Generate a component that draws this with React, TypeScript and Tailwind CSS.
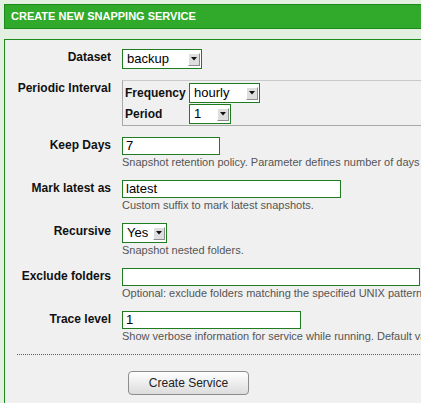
import React from 'react';

const Arrow = () => (
  <span className="mr-[1px] flex h-[13px] w-[12px] items-center justify-center border border-t-white border-l-white border-b-[#8c8c8c] border-r-[#8c8c8c] bg-[#dedede]">
    <svg width="6" height="4" viewBox="0 0 6 4">
      <path d="M0 0h6L3 3.5z" fill="#111" />
    </svg>
  </span>
);

const Select = ({ value, width, height = 'h-[20px]' }: { value: string; width: string; height?: string }) => (
  <div className={`flex ${width} ${height} items-center justify-between border border-[#1f7c1f] bg-white pl-[4px] text-[13px] text-black`}>
    <span>{value}</span>
    <Arrow />
  </div>
);

const Input = ({ value, width }: { value: string; width: string }) => (
  <div className={`flex ${width} h-[18px] items-center border border-[#1f7c1f] bg-white pl-[3px] text-[13px] text-black`}>
    {value}
  </div>
);

const Help = ({ children }: { children: React.ReactNode }) => (
  <div className="h-[14px] whitespace-nowrap text-[11px] leading-[14px] text-[#555]">{children}</div>
);

const Row = ({ label, children }: { label: string; children: React.ReactNode }) => (
  <div className="flex gap-[11px]">
    <div className="w-[106px] shrink-0 text-right text-[12px] font-bold leading-[16px] text-[#111]">{label}</div>
    <div className="flex flex-col">{children}</div>
  </div>
);

export default function App() {
  return (
    <div className="h-[403px] w-[421px] overflow-hidden bg-[#e3efe0] font-['Liberation_Sans',Arial,sans-serif]">
      <div className="w-[640px] pl-[4px] pt-[4px]">
        <div className="flex h-[25px] items-center border border-[#1b8a1b] bg-[#31a92a] pl-[6px] text-[11px] font-bold text-white">
          CREATE NEW SNAPPING SERVICE
        </div>
        <div className="mt-[10px] border-l border-t border-[#1b8a1b] bg-[#f0f0f0] pt-[9px]">
          <div className="flex flex-col gap-[11px]">
            <Row label="Dataset">
              <Select value="backup" width="w-[80px]" />
            </Row>
            <Row label="Periodic Interval">
              <div className="flex w-[500px] flex-col gap-[1px] border border-[#a8a8a8] border-t-[#c8c8c8] pb-[1px] pl-[2px] pt-[2px]">
                <div className="flex items-center gap-[2px]">
                  <span className="w-[62px] text-[12px] font-bold text-[#111]">Frequency</span>
                  <Select value="hourly" width="w-[71px]" />
                </div>
                <div className="flex items-center gap-[2px]">
                  <span className="w-[62px] text-[12px] font-bold text-[#111]">Period</span>
                  <Select value="1" width="w-[42px]" />
                </div>
              </div>
            </Row>
            <Row label="Keep Days">
              <Input value="7" width="w-[98px]" />
              <Help>Snapshot retention policy. Parameter defines number of days</Help>
            </Row>
            <Row label="Mark latest as">
              <Input value="latest" width="w-[219px]" />
              <Help>Custom suffix to mark latest snapshots.</Help>
            </Row>
            <Row label="Recursive">
              <Select value="Yes" width="w-[45px]" />
              <Help>Snapshot nested folders.</Help>
            </Row>
            <Row label="Exclude folders">
              <Input value="" width="w-[298px]" />
              <Help>Optional: exclude folders matching the specified UNIX pattern.</Help>
            </Row>
            <Row label="Trace level">
              <Input value="1" width="w-[179px]" />
              <Help>Show verbose information for service while running. Default value: 1</Help>
            </Row>
          </div>
          <div className="ml-[12px] mt-[11px] border-t border-dotted border-[#0c9a0c]" />
          <div className="pb-[9px] pl-[123px] pt-[15px]">
            <button className="h-[24px] w-[121px] rounded-[4px] border border-[#8c8c8c] bg-gradient-to-b from-white to-[#dcdcdc] text-[12px] text-[#222]">
              Create Service
            </button>
          </div>
        </div>
      </div>
    </div>
  );
}
